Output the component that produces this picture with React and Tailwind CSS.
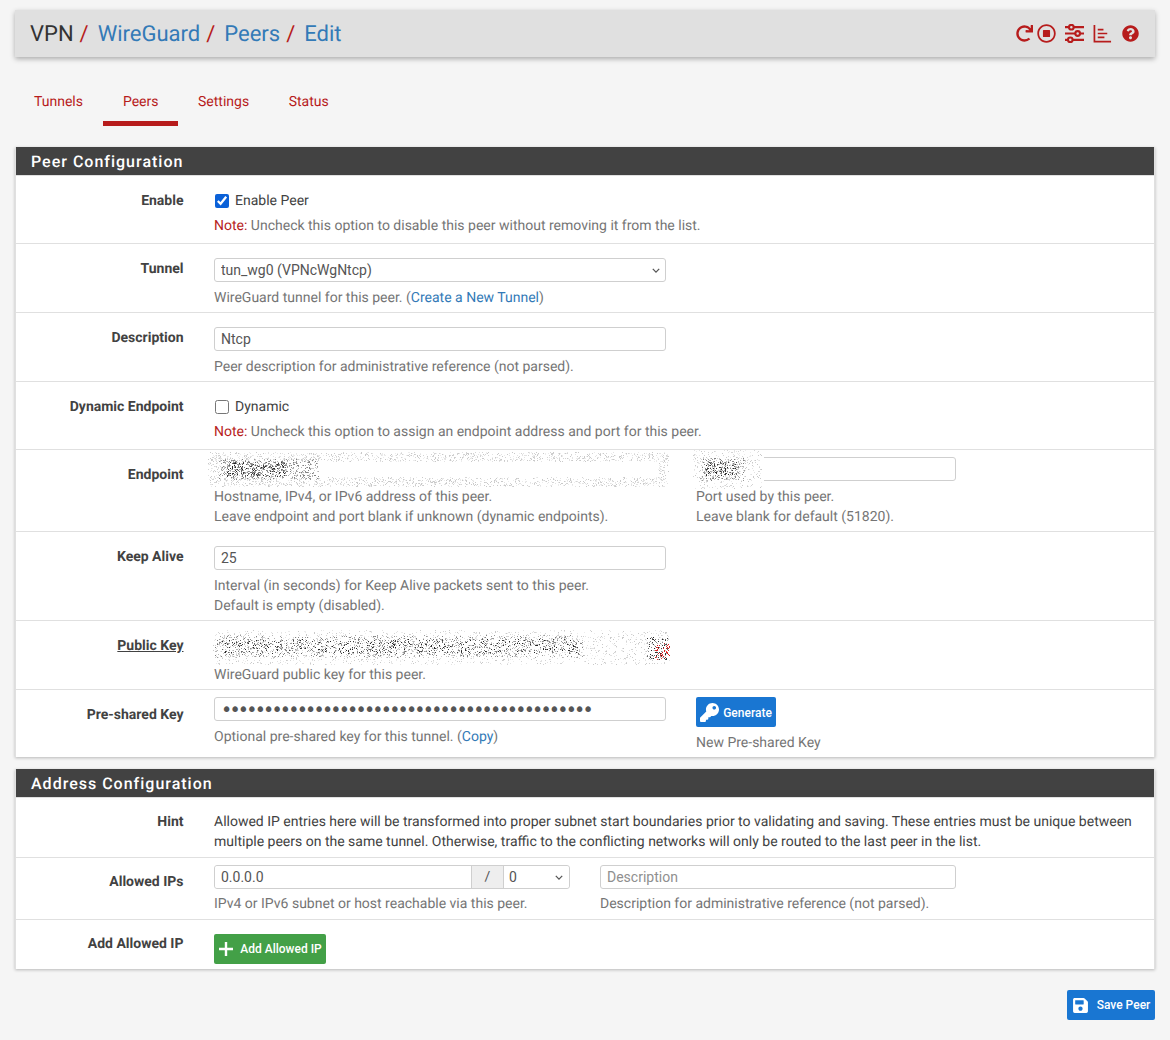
import { FaRedo, FaRegStopCircle, FaQuestionCircle, FaKey, FaSave } from "react-icons/fa";

const speckle = (seed, clusters) => {
  let s = seed;
  const rnd = () => {
    s = (s * 16807) % 2147483647;
    return s / 2147483647;
  };
  const dots = [];
  clusters.forEach(([x, y, w, h, count, colors]) => {
    for (let i = 0; i < count; i++) {
      dots.push({
        x: Math.round(x + rnd() * w),
        y: Math.round(y + rnd() * h),
        c: colors[Math.floor(rnd() * colors.length)],
      });
    }
  });
  return dots;
};

const light = ["#e3e3e3", "#d4d4d4", "#ececec", "#c9c9c9"];
const mid = ["#b5b5b5", "#9a9a9a", "#cfcfcf", "#808080"];
const dark = ["#3d3d3d", "#666666", "#8a8a8a", "#262626", "#b0b0b0"];

function Noise({ seed, width, height, clusters, className }) {
  return (
    <svg width={width} height={height} className={className}>
      {speckle(seed, clusters).map((d, i) => (
        <rect key={i} x={d.x} y={d.y} width="1" height="1" fill={d.c} />
      ))}
    </svg>
  );
}

function Row({ label, underline, tight, children }) {
  return (
    <div className="grid grid-cols-[168px_1fr] gap-x-[30px] border-t border-[#e0e0e0] first:border-t-0">
      <div className={tight ? "pt-[14px] pr-[0.5px] text-right font-bold text-[#424242] leading-5" : "pt-[15px] pr-[0.5px] text-right font-bold text-[#424242] leading-5"}>
        {underline ? <span className="underline">{label}</span> : label}
      </div>
      <div>{children}</div>
    </div>
  );
}

function Help({ children }) {
  return <div className="leading-5 text-[#757575]">{children}</div>;
}

function Note({ children }) {
  return (
    <div className="leading-5 mt-[5px] mb-[7px] text-[#757575]">
      <span className="text-[#b71c1c]">Note:</span> {children}
    </div>
  );
}

function Panel({ title, children }) {
  return (
    <div className="bg-white shadow-[0_1px_3px_rgba(0,0,0,0.25)] border-x border-[#e0e0e0]">
      <div className="h-[28px] bg-[#424242] pl-[15px] text-[16px] leading-[29px] font-medium tracking-[1px] text-white">{title}</div>
      {children}
    </div>
  );
}

const inputCls = "h-6 w-[452px] rounded-[3px] border border-[#cfcfcf] bg-white px-[6px] text-[14px] text-[#555555] outline-none";

export default function App() {
  return (
    <div className="min-h-[1040px] bg-[#f5f5f5] px-[15px] pt-[10px] text-[14px] text-[#424242] font-['Roboto',sans-serif] [text-rendering:geometricPrecision]">
      <div className="flex h-[47px] items-center justify-between bg-[#e0e0e0] pl-[15px] pr-[15px] shadow-[0_2px_5px_rgba(0,0,0,0.3)]">
        <div className="pt-[2px] text-[22px] leading-[45px]">
          <span className="text-[#333333]">VPN</span>
          <span className="text-[#b71c1c] ml-[6px] mr-[9px]">/</span>
          <span className="text-[#337ab7]">WireGuard</span>
          <span className="text-[#b71c1c] ml-[6px] mr-[9px]">/</span>
          <span className="text-[#337ab7]">Peers</span>
          <span className="text-[#b71c1c] ml-[6px] mr-[9px]">/</span>
          <span className="text-[#337ab7]">Edit</span>
        </div>
        <div className="flex items-center text-[#b71c1c]">
          <FaRedo className="h-[17px] w-[17px]" />
          <FaRegStopCircle className="ml-[4px] h-[19px] w-[19px]" />
          <svg viewBox="0 0 18 18" className="ml-[9px] h-[19px] w-[19px]" fill="none" stroke="currentColor" strokeWidth="2">
            <path d="M0 3h18M0 9h18M0 15h18" />
            <circle cx="6" cy="3" r="2.2" fill="#e0e0e0" />
            <circle cx="12" cy="9" r="2.2" fill="#e0e0e0" />
            <circle cx="5" cy="15" r="2.2" fill="#e0e0e0" />
          </svg>
          <svg viewBox="0 0 20 20" className="ml-[9px] h-[19px] w-[19px]" fill="none" stroke="currentColor" strokeWidth="1.8">
            <path d="M1.5 1v17.5H19" />
            <path d="M5 6h6M5 10h10M5 14h7" />
          </svg>
          <FaQuestionCircle className="ml-[10px] mr-[1px] h-[17px] w-[17px]" />
        </div>
      </div>

      <div className="mt-[23px] flex h-[46px] gap-px text-[#b71c1c]">
        <div className="px-[19px] pt-[12px] leading-5">Tunnels</div>
        <div className="border-b-[5px] border-[#b71c1c] pl-5 pr-[19px] pt-[12px] leading-5">Peers</div>
        <div className="px-[19.5px] pt-[12px] leading-5">Settings</div>
        <div className="px-[19px] pt-[12px] leading-5">Status</div>
      </div>

      <div className="mt-[21px]">
        <Panel title="Peer Configuration">
          <Row label="Enable">
            <label className="flex h-5 mt-[15px] items-center leading-5">
              <input type="checkbox" defaultChecked className="ml-px mr-[6px] h-[14px] w-[14px] accent-[#0b61d8]" />
              Enable Peer
            </label>
            <Note>Uncheck this option to disable this peer without removing it from the list.</Note>
          </Row>
          <Row label="Tunnel">
            <div className="relative mt-[14px] w-[452px]">
              <select className={`${inputCls} block appearance-none`} defaultValue="tun">
                <option value="tun">tun_wg0 (VPNcWgNtcp)</option>
              </select>
              <svg viewBox="0 0 10 6" className="pointer-events-none absolute right-[6px] top-[10px] h-[5px] w-[8px]" fill="none" stroke="#555555" strokeWidth="1.6">
                <path d="M1 1l4 4 4-4" />
              </svg>
            </div>
            <div className="mt-[6px] mb-[4px]">
              <Help>WireGuard tunnel for this peer. (<span className="text-[#337ab7]">Create a New Tunnel</span>)</Help>
            </div>
          </Row>
          <Row label="Description">
            <input className={`${inputCls} mt-[14px] block`} defaultValue="Ntcp" />
            <div className="mt-[6px] mb-[4px]">
              <Help>Peer description for administrative reference (not parsed).</Help>
            </div>
          </Row>
          <Row label="Dynamic Endpoint">
            <label className="flex h-5 mt-[15px] items-center leading-5">
              <input type="checkbox" className="ml-px mr-[6px] h-[14px] w-[14px]" />
              Dynamic
            </label>
            <Note>Uncheck this option to assign an endpoint address and port for this peer.</Note>
          </Row>
          <Row label="Endpoint">
            <div className="grid grid-cols-[452px_1fr] gap-x-[30px]">
              <div>
                <div className="relative mt-[7px] h-6">
                  <Noise
                    seed={4217}
                    width={470}
                    height={40}
                    className="absolute -left-[6px] -top-[7px]"
                    clusters={[
                      [2, 2, 458, 9, 1100, light],
                      [2, 27, 458, 9, 1100, light],
                      [0, 9, 12, 20, 70, light],
                      [450, 9, 10, 20, 50, light],
                      [10, 9, 100, 20, 600, mid],
                      [18, 12, 60, 14, 250, dark],
                    ]}
                  />
                </div>
                <div className="mt-[6px] mb-[4px]">
                  <Help>Hostname, IPv4, or IPv6 address of this peer.</Help>
                  <Help>Leave endpoint and port blank if unknown (dynamic endpoints).</Help>
                </div>
              </div>
              <div>
                <div className="relative mt-[7px] h-6 w-[260px] rounded-[3px] border border-[#cfcfcf] bg-white">
                  <Noise
                    seed={977}
                    width={72}
                    height={40}
                    className="absolute -left-[5px] -top-[8px] bg-white"
                    clusters={[
                      [1, 0, 68, 38, 380, light],
                      [8, 8, 45, 22, 240, mid],
                      [14, 11, 30, 14, 100, dark],
                    ]}
                  />
                </div>
                <div className="mt-[6px] mb-[4px]">
                  <Help>Port used by this peer.</Help>
                  <Help>Leave blank for default (51820).</Help>
                </div>
              </div>
            </div>
          </Row>
          <Row label="Keep Alive">
            <input className={`${inputCls} mt-[14px] block`} defaultValue="25" />
            <div className="mt-[6px] mb-[4px]">
              <Help>Interval (in seconds) for Keep Alive packets sent to this peer.</Help>
              <Help>Default is empty (disabled).</Help>
            </div>
          </Row>
          <Row label="Public Key" underline>
            <div className="relative mt-[8px] h-[36px]">
              <Noise
                seed={31337}
                width={465}
                height={36}
                className="absolute -left-[3px] top-0"
                clusters={[
                  [2, 1, 456, 34, 1700, light],
                  [3, 6, 370, 22, 1100, mid],
                  [5, 10, 362, 14, 650, dark],
                  [436, 8, 20, 22, 110, dark],
                  [444, 14, 14, 16, 45, ["#e02020", "#c41c1c", "#f03030"]],
                ]}
              />
            </div>
            <div className="mb-[4px]">
              <Help>WireGuard public key for this peer.</Help>
            </div>
          </Row>
          <Row label="Pre-shared Key">
            <div className="grid grid-cols-[452px_1fr] gap-x-[30px]">
              <div>
                <input
                  type="password"
                  readOnly
                  className={`${inputCls} mt-[7px] block font-['DejaVu_Sans',sans-serif] text-[19px] tracking-[-2.8px]`}
                  value="01234567890123456789012345678901234567890123"
                />
                <div className="mt-[6px] mb-[10px]">
                  <Help>Optional pre-shared key for this tunnel. (<span className="text-[#337ab7]">Copy</span>)</Help>
                </div>
              </div>
              <div>
                <button className="mt-[7px] flex h-[30px] w-[80px] items-center justify-center rounded-[2px] bg-[#1976d2] pt-px text-[12px] font-medium text-white">
                  <FaKey className="mr-[4px] h-[19px] w-[19px]" />
                  Generate
                </button>
                <div className="mt-[6px]">
                  <Help>New Pre-shared Key</Help>
                </div>
              </div>
            </div>
          </Row>
        </Panel>
      </div>

      <div className="mt-[12px]">
        <Panel title="Address Configuration">
          <Row label="Hint" tight>
            <div className="mt-[14px] mb-[5px] pr-[20px] leading-5 text-[#424242]">
              Allowed IP entries here will be transformed into proper subnet start boundaries prior to validating and saving. These entries must be unique between multiple peers on the same tunnel. Otherwise, traffic to the conflicting networks will only be routed to the last peer in the list.
            </div>
          </Row>
          <Row label="Allowed IPs" tight>
            <div className="grid grid-cols-[356px_1fr] gap-x-[30px]">
              <div>
                <div className="mt-[7px] flex h-6 rounded-[3px] border border-[#cfcfcf] bg-white">
                  <input className="h-full min-w-0 flex-1 rounded-l-[3px] bg-white px-[6px] text-[#555555] outline-none" defaultValue="0.0.0.0" />
                  <div className="flex h-full w-[33px] items-center justify-center border-x border-[#cfcfcf] bg-[#eeeeee] text-[#555555]">/</div>
                  <div className="relative w-[65px]">
                    <select className="h-full w-full appearance-none rounded-r-[3px] bg-white pl-[5px] text-[#555555] outline-none" defaultValue="0">
                      <option value="0">0</option>
                    </select>
                    <svg viewBox="0 0 10 6" className="pointer-events-none absolute right-[6px] top-[9px] h-[5px] w-[8px]" fill="none" stroke="#555555" strokeWidth="1.6">
                      <path d="M1 1l4 4 4-4" />
                    </svg>
                  </div>
                </div>
                <div className="mt-[5px] mb-[5px]">
                  <Help>IPv4 or IPv6 subnet or host reachable via this peer.</Help>
                </div>
              </div>
              <div>
                <input className="mt-[7px] block h-6 w-[356px] rounded-[3px] border border-[#cfcfcf] bg-white px-[6px] text-[#555555] outline-none placeholder:text-[#8f8f8f]" placeholder="Description" />
                <div className="mt-[5px] mb-[5px]">
                  <Help>Description for administrative reference (not parsed).</Help>
                </div>
              </div>
            </div>
          </Row>
          <Row label="Add Allowed IP" tight>
            <button className="mt-[14px] mb-[5px] flex h-[30px] w-[112px] items-center justify-center rounded-[2px] bg-[#43a047] text-[12px] font-medium text-white">
              <svg viewBox="0 0 16 16" className="mr-[6px] h-[16px] w-[16px]" fill="none" stroke="currentColor" strokeWidth="2.4">
                <path d="M8 1v14M1 8h14" />
              </svg>
              Add Allowed IP
            </button>
          </Row>
        </Panel>
      </div>

      <div className="mt-[21px] flex justify-end">
        <button className="flex h-[30px] w-[88px] items-center justify-center rounded-[2px] bg-[#1976d2] text-[12px] font-medium text-white">
          <FaSave className="mr-[8px] h-[17px] w-[17px]" />
          Save Peer
        </button>
      </div>
    </div>
  );
}
